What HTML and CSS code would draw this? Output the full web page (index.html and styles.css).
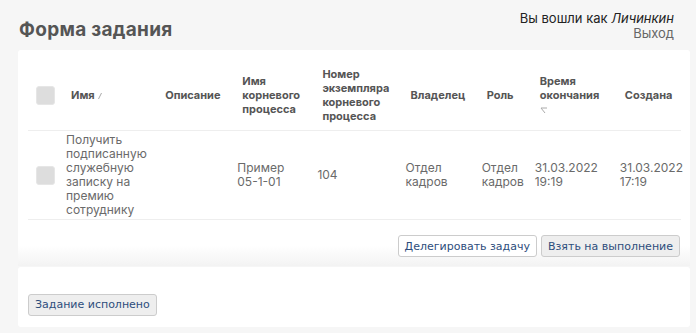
FILE: index.html
```html
<!DOCTYPE html>
<html lang="ru">
<head>
<meta charset="UTF-8">
<meta name="viewport" content="width=device-width, initial-scale=1.0">
<title>Форма задания</title>
<link rel="stylesheet" href="styles.css">
</head>
<body>
    <div class="top-bar">
        <h2 class="page-title">Форма задания</h2>
        <div class="user-info">
            <div>Вы вошли как <i>Личинкин</i></div>
            <a href="#" class="logout">Выход</a>
        </div>
    </div>

    <div class="card task-card">
        <table class="task-table">
            <colgroup>
                <col style="width: 33px">
                <col style="width: 94px">
                <col style="width: 77px">
                <col style="width: 80px">
                <col style="width: 88px">
                <col style="width: 76px">
                <col style="width: 53px">
                <col style="width: 85px">
                <col style="width: 66px">
            </colgroup>
            <thead>
                <tr>
                    <th class="check-cell"><span class="checkbox"></span></th>
                    <th>Имя <svg class="sort-icon" width="6" height="8" viewBox="0 0 6 8"><path d="M1.5 7 L4.5 1" stroke="#aaa" stroke-width="1" fill="none"/></svg></th>
                    <th>Описание</th>
                    <th>Имя корневого процесса</th>
                    <th>Номер экземпляра корневого процесса</th>
                    <th>Владелец</th>
                    <th>Роль</th>
                    <th>Время окончания<br><svg class="sort-icon" width="8" height="7" viewBox="0 0 8 7"><path d="M1 1 L7 1 M1 1 L5 6" stroke="#aaa" stroke-width="1" fill="none"/></svg></th>
                    <th>Создана</th>
                </tr>
            </thead>
            <tbody>
                <tr>
                    <td class="check-cell"><span class="checkbox"></span></td>
                    <td>Получить подписанную служебную записку на премию сотруднику</td>
                    <td></td>
                    <td>Пример <span class="nowrap">05-1-01</span></td>
                    <td>104</td>
                    <td>Отдел кадров</td>
                    <td>Отдел кадров</td>
                    <td>31.03.2022 19:19</td>
                    <td>31.03.2022 17:19</td>
                </tr>
            </tbody>
        </table>
        <div class="card-actions">
            <button class="btn btn-light">Делегировать задачу</button>
            <button class="btn">Взять на выполнение</button>
        </div>
    </div>

    <div class="card form-card">
        <button class="btn">Задание исполнено</button>
    </div>
</body>
</html>
```

FILE: styles.css
```css
body {
    margin: 0;
    padding: 0 6px 0 18px;
    background-color: #f6f6f6;
    font-family: "Inter", Arial, sans-serif;
    color: #666;
}

.top-bar {
    display: flex;
    justify-content: space-between;
    align-items: flex-start;
    height: 50px;
    padding-right: 16px;
}

.page-title {
    margin: 18px 0 0 1px;
    font-size: 19px;
    letter-spacing: 0.3px;
    font-weight: 700;
    color: #555;
}

.user-info {
    margin-top: 11px;
    text-align: right;
    font-size: 13px;
    line-height: 15px;
    color: #222;
}

.logout {
    color: #666;
    text-decoration: none;
}

.card {
    background-color: #fff;
    border-radius: 3px;
}

.task-card {
    padding: 10px 10px 0 10px;
}

.task-table {
    width: 653px;
    table-layout: fixed;
    border-collapse: collapse;
}

.task-table th {
    padding: 7px 2px 7px 10px;
    font-size: 11px;
    line-height: 14px;
    font-weight: 700;
    color: #555;
    text-align: left;
    vertical-align: middle;
    border-bottom: 1px solid #eee;
}

.task-table td {
    padding: 2px 2px 2px 5px;
    font-size: 12px;
    line-height: 14px;
    color: #6a6a6a;
    vertical-align: middle;
    border-bottom: 1px solid #eee;
}

.task-table .check-cell {
    padding-left: 8px;
}

.nowrap {
    white-space: nowrap;
}

.checkbox {
    display: block;
    width: 17px;
    height: 17px;
    background-color: #ddd;
    border: 1px solid #e6e6e6;
    border-radius: 3px;
}

.sort-icon {
    vertical-align: middle;
}

.card-actions {
    display: flex;
    justify-content: flex-end;
    gap: 4px;
    padding: 15px 10px 9px 0;
    margin: 0 -10px;
    background: linear-gradient(#fff 55%, #f3f3f3);
}

.btn {
    height: 22px;
    padding: 0 6px;
    font-family: "DejaVu Sans", Verdana, sans-serif;
    font-size: 11px;
    color: #2d4d7c;
    background-color: #eee;
    border: 1px solid #ccc;
    border-radius: 3px;
}

.btn-light {
    background-color: #fff;
}

.form-card {
    margin-top: 1px;
    padding: 25px 10px 11px 10px;
}
```
